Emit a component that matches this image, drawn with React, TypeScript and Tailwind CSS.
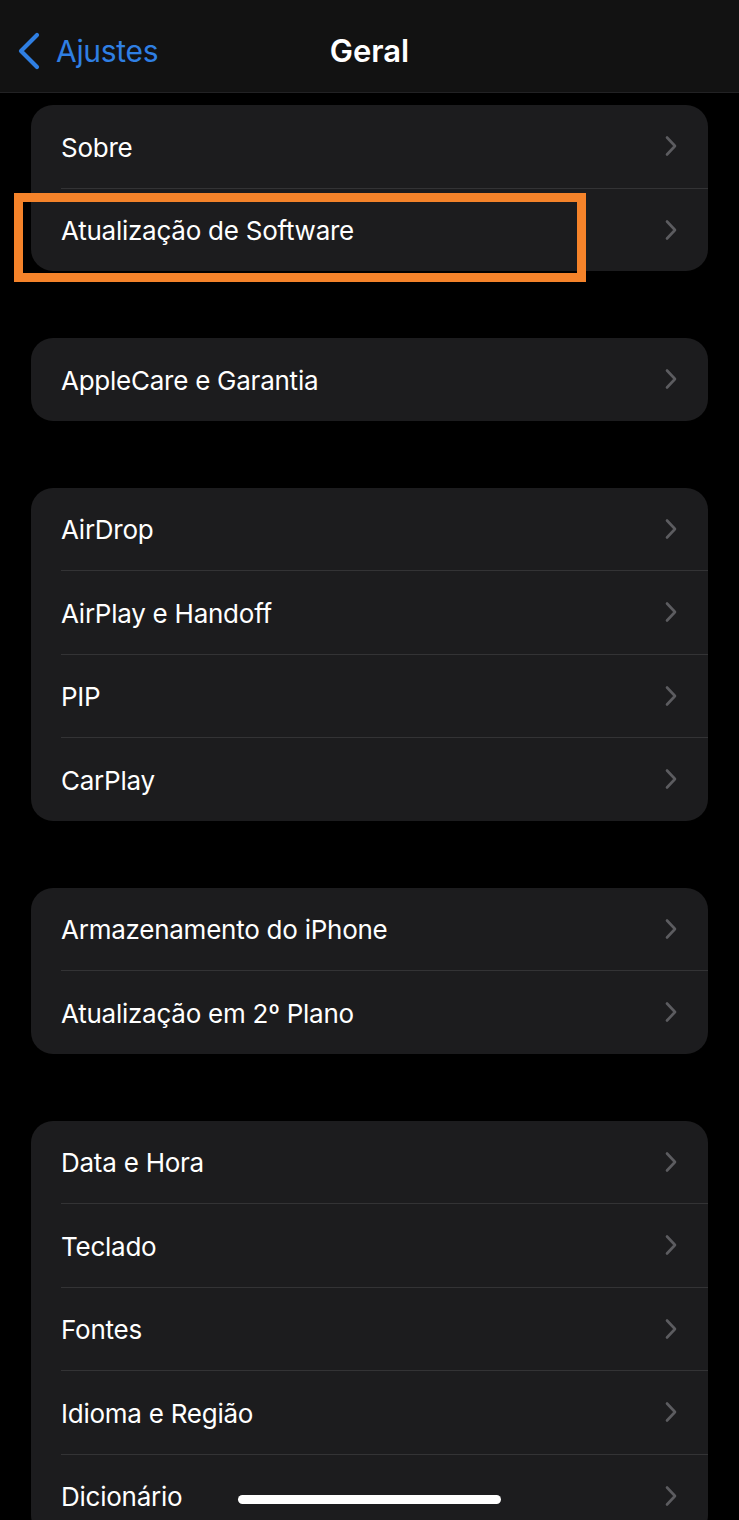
import { Fragment } from "react";

const groups: string[][] = [
  ["Sobre", "Atualização de Software"],
  ["AppleCare e Garantia"],
  ["AirDrop", "AirPlay e Handoff", "PIP", "CarPlay"],
  ["Armazenamento do iPhone", "Atualização em 2º Plano"],
  ["Data e Hora", "Teclado", "Fontes", "Idioma e Região", "Dicionário"],
];

function Chevron() {
  return (
    <svg width="14" height="22" viewBox="0 0 14 22" fill="none">
      <path
        d="M3 2.5 L11 11 L3 19.5"
        stroke="#5c5c60"
        strokeWidth="2.6"
        strokeLinecap="round"
        strokeLinejoin="round"
      />
    </svg>
  );
}

function Row({ label }: { label: string }) {
  return (
    <div className="flex h-[82.5px] items-center justify-between pl-[30px] pr-[30px]">
      <span className="pt-[3px] text-[26px] leading-none tracking-[-0.25px] text-white">{label}</span>
      <Chevron />
    </div>
  );
}

export default function App() {
  return (
    <div
      className="relative h-[1520px] w-[739px] overflow-hidden bg-black"
      style={{ fontFamily: "Inter, 'Noto Sans', sans-serif" }}
    >
      <header className="relative flex h-[93px] items-center border-b border-[#222224] bg-[#121212] pt-[8px]">
        <div className="absolute left-[16px] top-[32px] flex items-center gap-[14px]">
          <svg width="26" height="38" viewBox="0 0 26 38" fill="none">
            <path
              d="M21 3 L5 19 L21 35"
              stroke="#2f7fe3"
              strokeWidth="4.2"
              strokeLinecap="round"
              strokeLinejoin="round"
            />
          </svg>
          <span className="text-[30px] leading-none tracking-[-0.3px] text-[#2f7fe3]">Ajustes</span>
        </div>
        <h1 className="w-full text-center text-[31px] font-semibold leading-none text-white">Geral</h1>
      </header>

      <main className="flex flex-col gap-[67px] px-[31px] pt-[12px]">
        {groups.map((rows, gi) => (
          <section key={gi} className="relative rounded-[22px] bg-[#1c1c1e]">
            {rows.map((label, ri) => (
              <Fragment key={label}>
                {ri > 0 ? <div className="ml-[30px] h-px bg-[#333335]" /> : null}
                <Row label={label} />
              </Fragment>
            ))}
            {gi === 0 ? (
              <div className="absolute left-[-17px] top-[88px] h-[89px] w-[572px] border-[9px] border-[#f5832a]" />
            ) : null}
          </section>
        ))}
      </main>

      <div className="absolute bottom-[16px] left-[238px] h-[9px] w-[263px] rounded-full bg-white" />
    </div>
  );
}
